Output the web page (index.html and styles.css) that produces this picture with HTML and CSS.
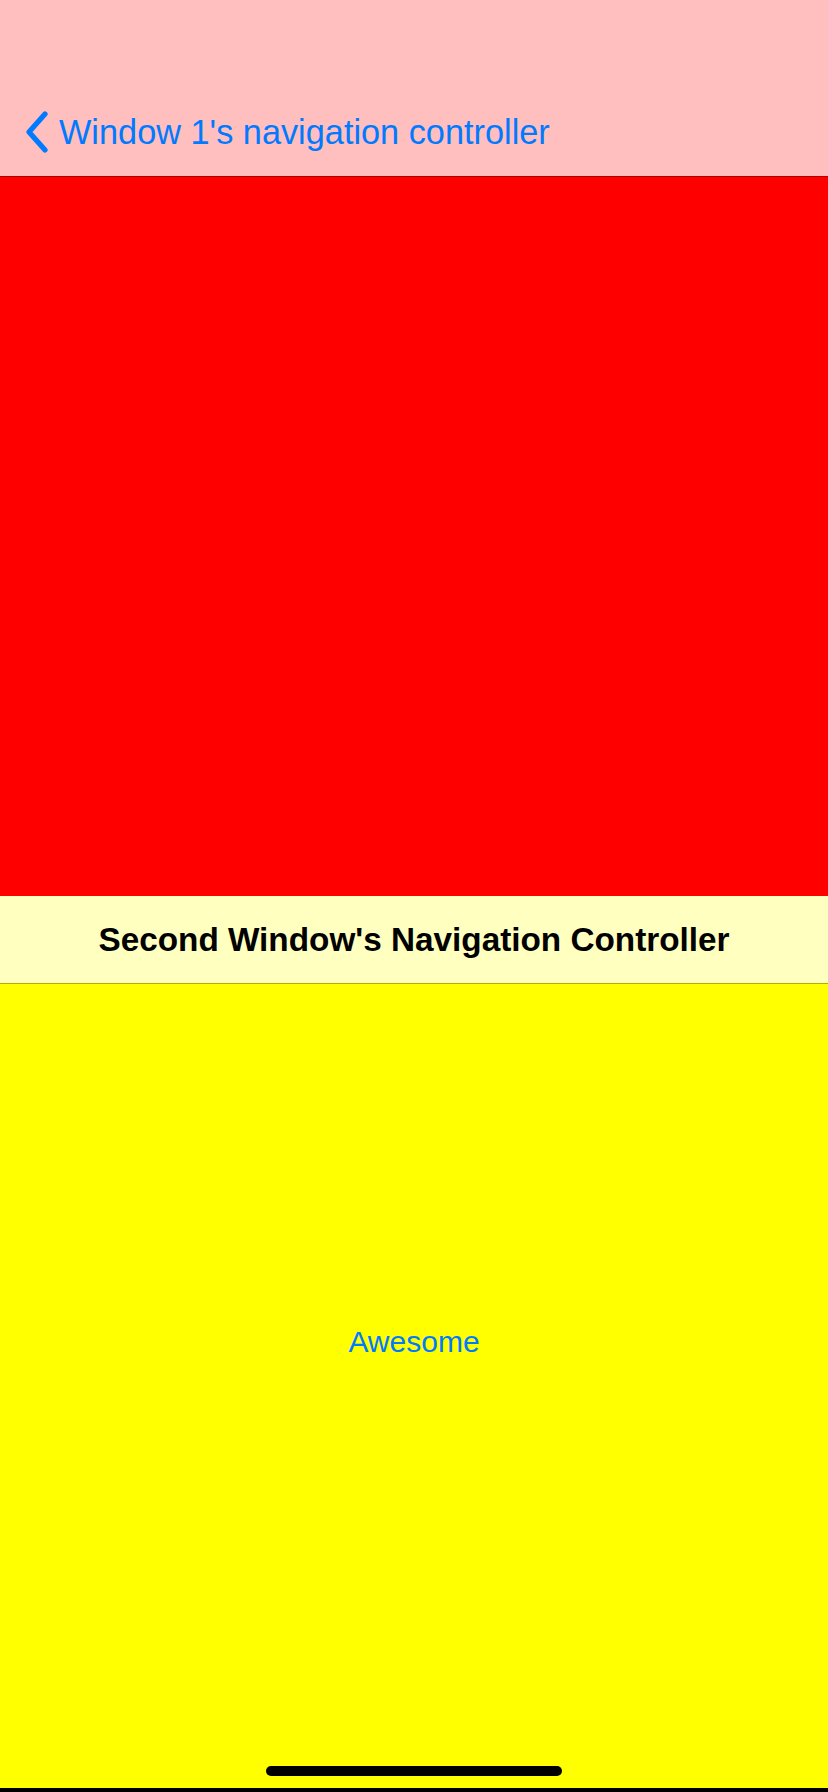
FILE: index.html
```html
<!DOCTYPE html>
<html>
<head>
<meta charset="utf-8">
<link rel="stylesheet" href="styles.css">
</head>
<body>
<div class="screen">
  <header class="nav nav-top">
    <div class="nav-row">
      <a class="back">
        <svg class="chevron" width="26" height="42" viewBox="0 0 26 42">
          <path d="M21 3 L5 21 L21 39" fill="none" stroke="#007aff" stroke-width="5.2" stroke-linecap="round" stroke-linejoin="round"/>
        </svg>
        <span class="back-label">Window 1's navigation controller</span>
      </a>
    </div>
  </header>
  <main class="red-view"></main>
  <header class="nav nav-second">
    <h1 class="title">Second Window's Navigation Controller</h1>
  </header>
  <section class="yellow-view">
    <div class="content">
      <span class="link">Awesome</span>
    </div>
    <div class="home-indicator"></div>
  </section>
  <div class="bottom-strip"></div>
</div>
</body>
</html>
```
FILE: styles.css
```css
html, body {
  margin: 0;
  padding: 0;
}
body {
  width: 828px;
  height: 1792px;
  overflow: hidden;
  font-family: "Liberation Sans", Arial, sans-serif;
}
.screen {
  display: flex;
  flex-direction: column;
  height: 1792px;
}
.nav-top {
  height: 177px;
  background: #ffbfbf;
  border-bottom: 1px solid #b00000;
  display: flex;
  flex-direction: column;
  justify-content: flex-end;
  box-sizing: border-box;
}
.nav-row {
  height: 88px;
  display: flex;
  align-items: center;
  padding-left: 24px;
}
.back {
  display: flex;
  align-items: center;
  gap: 9px;
  color: #007aff;
}
.chevron {
  display: block;
}
.back-label {
  font-size: 34.3px;
  line-height: 40px;
}
.red-view {
  height: 719px;
  background: #ff0000;
}
.nav-second {
  height: 88px;
  background: #ffffc0;
  border-bottom: 1px solid #b0b000;
  box-sizing: border-box;
  display: flex;
  align-items: center;
  justify-content: center;
}
.title {
  margin: 0;
  font-size: 33.3px;
  font-weight: bold;
  color: #000;
  line-height: 40px;
}
.yellow-view {
  flex: 1;
  background: #ffff00;
  display: flex;
  flex-direction: column;
  align-items: center;
}
.content {
  flex: 1;
  display: flex;
  align-items: flex-start;
  padding-top: 340px;
}
.link {
  font-size: 30px;
  line-height: 36px;
  color: #007aff;
}
.home-indicator {
  width: 296px;
  height: 10px;
  border-radius: 5px;
  background: #000;
  margin-bottom: 12px;
}
.bottom-strip {
  height: 4px;
  background: #000;
}
```
